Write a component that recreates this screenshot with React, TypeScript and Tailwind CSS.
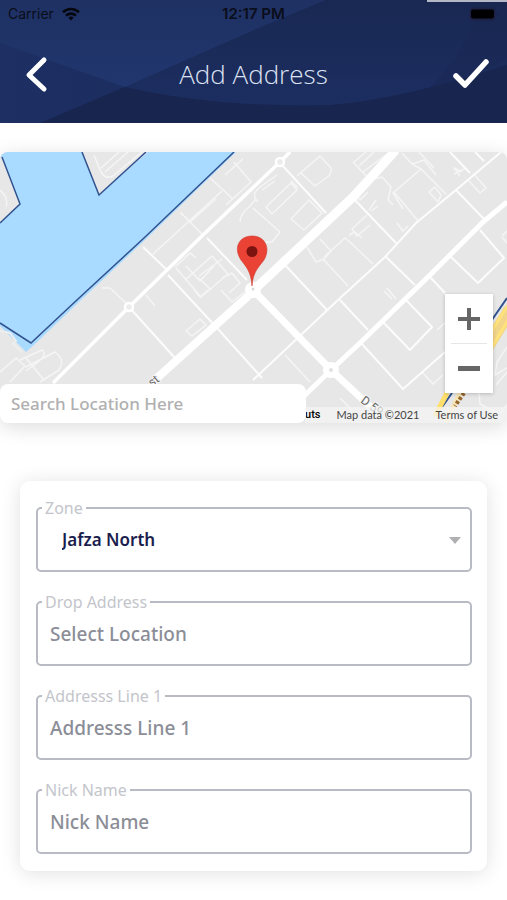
import { useState } from "react";

type Field = { id: string; label: string; placeholder: string };

const fields: Field[] = [
    { id: "drop", label: "Drop Address", placeholder: "Select Location" },
    { id: "line1", label: "Addresss Line 1", placeholder: "Addresss Line 1" },
    { id: "nick", label: "Nick Name", placeholder: "Nick Name" },
];

function StatusBar() {
    return (
        <div className="relative grid h-7 grid-cols-3 items-center px-2 text-sm text-[#0a0d1a] font-['Inter','Liberation_Sans',sans-serif]">
            <div className="flex items-center gap-2">
                <span>Carrier</span>
                <svg width="18" height="14" viewBox="0 0 18 14" fill="none" stroke="#05070f" strokeWidth="2.6">
                    <path d="M1 5.2a11.6 11.6 0 0 1 16 0" />
                    <path d="M4 8.6a7.4 7.4 0 0 1 10 0" />
                    <path d="M6.4 10.7a4 4 0 0 1 5.2 0L9 13.6z" fill="#05070f" stroke="none" />
                </svg>
            </div>
            <span className="text-center text-[15px] font-semibold">12:17 PM</span>
            <svg className="justify-self-end" width="30" height="14" viewBox="0 0 30 14">
                <rect x="0.5" y="0.5" width="26" height="13" rx="3.5" fill="#1c2145" />
                <rect x="2" y="2.5" width="23" height="9" rx="2" fill="#000" />
                <path d="M28 4.5q2 2.5 0 5z" fill="#1c2145" />
            </svg>
        </div>
    );
}

function Header() {
    return (
        <header className="relative h-[123px] overflow-hidden bg-[#1b2c5d]">
            <svg className="absolute inset-0 h-full w-full" viewBox="0 0 507 123" preserveAspectRatio="none">
                <defs>
                    <linearGradient id="hdr" x1="0" x2="1">
                        <stop offset="0" stopColor="#1d2f63" />
                        <stop offset="0.5" stopColor="#1b2c5d" />
                        <stop offset="1" stopColor="#192853" />
                    </linearGradient>
                    <linearGradient id="sky" x1="0" y1="0" x2="0" y2="1">
                        <stop offset="0" stopColor="#1f3163" />
                        <stop offset="1" stopColor="#20366e" />
                    </linearGradient>
                    <linearGradient id="wave" x1="0" y1="0" x2="0" y2="1">
                        <stop offset="0" stopColor="#192852" />
                        <stop offset="1" stopColor="#1c2e61" />
                    </linearGradient>
                </defs>
                <rect width="507" height="123" fill="url(#hdr)" />
                <path d="M0 0H326L254 30L125 87L0 43z" fill="url(#sky)" />
                <path d="M125 87L254 30L326 0H507V65Q400 100 330 105Q215 108 125 87z" fill="url(#wave)" />
                <path d="M427 90Q470 76 507 60V0H480Q470 50 427 90z" fill="#182650" opacity="0.4" />
                <path d="M40 123L125 87Q215 108 330 105Q400 100 507 65V123z" fill="#18254e" />
                <rect x="427" width="80" height="2" fill="#b3b7c6" />
            </svg>
            <StatusBar />
            <div className="relative flex h-[95px] items-center justify-between px-4 pb-1 text-[#dde3f3]">
                <button aria-label="Back" className="flex size-10 items-center justify-center">
                    <svg width="28" height="40" viewBox="22 54 28 40" fill="none" stroke="#fff" strokeWidth="5" strokeLinecap="round" strokeLinejoin="round">
                        <path d="M44 60L29 75L44 89" />
                    </svg>
                </button>
                <h1 className="text-[26px] leading-8 font-light font-['Open_Sans','Noto_Sans',sans-serif]">Add Address</h1>
                <button aria-label="Save" className="flex size-10 items-center justify-center">
                    <svg width="40" height="36" viewBox="452 57 40 36" fill="none" stroke="#fff" strokeWidth="5.5" strokeLinecap="round" strokeLinejoin="round">
                        <path d="M457 77L466 86L487 63" />
                    </svg>
                </button>
            </div>
        </header>
    );
}

function MapCanvas() {
    return (
        <svg className="block h-full w-full rounded-lg" viewBox="0 152 507 271" preserveAspectRatio="xMidYMid slice">
            <rect y="152" width="507" height="271" fill="#e7e7e7" />
            {/* water */}
            <path d="M0 152H236L146 239L80 301L36 343L26 352L18 344L0 326z" fill="#a9daff" />
            <path d="M0 157H2L20 204L0 223zM82 152L99 195L148 152z" fill="#e7e7e7" />
            <path d="M0 323L31 343L78 299L144 238L234 152M2 157L20 204L0 223M82 152L99 195L146 152" fill="none" stroke="#31538f" strokeWidth="1.5" />
            <path d="M0 331L10 333L16 341L13 344L22 352" fill="none" stroke="#eee" strokeWidth="2" />

            {/* lanes and plots */}
            <g fill="none" stroke="#f5f5f5" strokeWidth="1.5" strokeLinejoin="round">
                <path d="M94 155L101 172Q106 180 113 176L142 152M101 168L119 152M105 172L128 152M0 190Q9 198 6 207" />
                <path d="M210 178L233 199M234 162L251 182L226 205M225 175L243 159M180 212L203 235M153 254L222 191M190 222L216 199M240 222Q240 214 249 207L256 199" />
                <path d="M175 267L190 253L196 258M176 268L201 297L228 274L212 256L185 280M186 266L200 281L214 266M199 276L222 259M211 290L199 278M222 278L232 273L240 283L229 293" />
                <path d="M297 176L320 156L331 168Q332 174 326 178L315 186L301 173M353 162L370 180L388 161M354 162L366 152M359 166L374 152M363 172L390 152M262 190L275 181M258 202Q250 195 260 187L277 175M266 207L291 183L297 190L272 214zM291 181L298 188M291 219L309 200L322 213L304 230zM253 208L280 232L272 242L253 243" />
                <path d="M402 153L412 164L421 169L393 193L403 209M421 169L446 194M412 164L424 160L436 175M419 152L434 168M460 176L454 168L462 172M454 174L466 168M468 180L480 193L486 188L473 173M429 192L435 187L441 195L438 202zM370 180L382 177L391 187L388 200L393 205M368 192L360 200L352 192M376 200L369 210M378 206L371 211M397 223L403 231L408 226M394 192L418 221M367 215L352 229L357 236L370 225" />
                <path d="M307 247L316 262L324 259L331 251L320 239M323 259L348 286M324 257L345 238L352 244L373 264M349 235L355 232L362 238M384 291L392 299M387 288L396 299" />
                <path d="M186 331L200 319L206 325L192 336zM194 290L200 297L208 290M221 290L232 302L245 292M146 295L155 306M285 355L310 382M340 398L352 410" />
                <path d="M20 360L42 350Q48 354 38 362L26 371M26 358L44 380M0 372L16 358L25 366L10 382M26 367L55 352Q66 360 59 370L40 382M102 288L110 288L129 306M422 372L433 384L443 375M437 330L446 322M502 236L507 231M502 237L507 243M507 347L497 362L495 375L507 368M479 393L480 404L499 414L507 405M496 385L507 372" />
            </g>

            {/* streets */}
            <g fill="none" stroke="#fcfcfc" strokeWidth="2" strokeLinejoin="round">
                <path d="M282 165L326 213M207 238L247 280M143 247L167 270M168 275L217 328L262 378M129 307L175 358" />
                <path d="M501 152L456 190L416 223L385 257L338 300L303 333L253 380M353 198L396 243M386 257L415 285M456 190L485 220M450 152L470 173M475 152L484 161" />
                <path d="M285 265L327 310M340 300L368 330M383 322L410 350L432 327L406 300M361 343L403 389L445 352M451 257L478 283L504 258L480 230M430 277L445 293" />
            </g>
            <path d="M290 152L280 162L203 235L167 270L129 307L53 383" fill="none" stroke="#fff" strokeWidth="3.5" />
            <path d="M507 202L483 222L430 275L360 343L331 370L303 397" fill="none" stroke="#fff" strokeWidth="5" />
            <path d="M253 290L331 370L360 397L378 414" fill="none" stroke="#fff" strokeWidth="7" />
            <path d="M396 150L353 197L256 288" fill="none" stroke="#fff" strokeWidth="9" />
            <path d="M256 288L247 297L217 324L157 378" fill="none" stroke="#fff" strokeWidth="8" />
            <g fill="#ececec" stroke="#fff" strokeWidth="2.5">
                <circle cx="280" cy="162" r="4" />
                <circle cx="129" cy="307" r="4" />
            </g>
            <circle cx="331" cy="370" r="8" fill="#fff" />
            <circle cx="331" cy="370" r="2" fill="#e2e2e2" />
            <circle cx="253" cy="290" r="8" fill="#fff" />
            <circle cx="253" cy="289" r="1.5" fill="#d8d8d8" />

            {/* highway */}
            <path d="M510 310L487 347" stroke="#f3d58a" strokeWidth="13" />
            <path d="M510 302L484 343M510 317L490 350" stroke="#ffe37a" strokeWidth="3" />
            <path d="M507 298L485 330M452 393L442 407" stroke="#31538f" strokeWidth="2" />
            <path d="M447 393L435 416" stroke="#ffdf6b" strokeWidth="5" />
            <path d="M460 393L446 422" stroke="#f7e6b8" strokeWidth="5" />
            <path d="M464 393L455 406" stroke="#95652b" strokeWidth="4" strokeDasharray="3 2" />

            <g fill="#666" stroke="#f5f5f5" strokeWidth="2" paintOrder="stroke" fontSize="12" fontFamily="Roboto, sans-serif">
                <text transform="translate(152 387) rotate(-38)">st</text>
                <text transform="translate(360 402) rotate(36)">D 59</text>
            </g>

            {/* pin */}
            <path d="M252 286C251 272 247 268 241 260C233 248 239 236 252 236C265 236 271 248 264 260C258 268 253 272 252 286z" fill="#ea4335" stroke="#cf3b30" strokeWidth="0.6" />
            <circle cx="252" cy="251.500" r="5.5" fill="#7b140e" />
        </svg>
    );
}

function MapCard() {
    return (
        <section className="relative mt-[29px] h-[271px] rounded-lg shadow-[0_4px_20px_rgba(0,0,0,0.14)]">
            <MapCanvas />
            <div className="absolute right-[14px] bottom-[30px] flex w-12 flex-col items-center bg-white shadow-[0_1px_4px_rgba(0,0,0,0.2)]">
                <button aria-label="Zoom in" className="flex h-[49px] w-full items-center justify-center">
                    <svg width="22" height="22" viewBox="0 0 22 22" fill="#666">
                        <path d="M9 0h4v9h9v4h-9v9H9v-9H0V9h9z" />
                    </svg>
                </button>
                <div className="h-px w-9 bg-[#e6e6e6]" />
                <button aria-label="Zoom out" className="flex h-[49px] w-full items-center justify-center">
                    <svg width="22" height="5" viewBox="0 0 22 5" fill="#666">
                        <path d="M0 0h22v5H0z" />
                    </svg>
                </button>
            </div>
            <div className="absolute right-0 bottom-0 flex h-4 items-center gap-4 rounded-br-lg bg-[#f5f5f5]/70 pr-[9px] text-[11px] leading-4 text-[#444] font-['Lato',sans-serif]">
                <button className="font-medium text-black font-['Roboto',sans-serif]">uts</button>
                <span>Map data ©2021</span>
                <a href="#terms">Terms of Use</a>
            </div>
            <input
                type="text"
                aria-label="Search location"
                placeholder="Search Location Here"
                className="absolute bottom-0 left-0 h-[39px] w-[306px] rounded-lg bg-white pl-[11px] text-[17px] font-medium text-[#444] outline-none placeholder:text-[#b0b0b0]"
            />
        </section>
    );
}

const boxCls = "h-[74px] min-w-0 rounded-[5px] border-2 border-[#b8bac4]";
const legendCls = "ml-1 h-5 px-[3px] text-base leading-5 text-[#c3c5cb]";

export default function App() {
    const [zone, setZone] = useState("Jafza North");

    return (
        <main className="w-full overflow-hidden bg-white pb-[29px] font-['Noto_Sans','Open_Sans',sans-serif]">
            <Header />
            <MapCard />

            <form className="mx-5 mt-[58px] flex flex-col gap-5 rounded-[10px] bg-white pt-[17px] pr-[15px] pb-[17px] pl-4 shadow-[0_2px_20px_rgba(0,0,0,0.12)]">
                <fieldset className={boxCls}>
                    <legend className={legendCls}>
                        <label htmlFor="zone">Zone</label>
                    </legend>
                    <div className="relative flex h-11 items-center">
                        <select
                            id="zone"
                            value={zone}
                            onChange={e => setZone(e.target.value)}
                            className="h-full w-full appearance-none bg-transparent pl-6 text-[17px] font-semibold text-[#1a1d4d] outline-none"
                        >
                            <option>Jafza North</option>
                            <option>Jafza South</option>
                        </select>
                        <svg className="pointer-events-none absolute right-[9px]" width="12" height="7" viewBox="0 0 12 7">
                            <path d="M0 0h12L6 7z" fill="#b0b0b3" />
                        </svg>
                    </div>
                </fieldset>

                {fields.map(f => (
                    <fieldset key={f.id} className={boxCls}>
                        <legend className={legendCls}>
                            <label htmlFor={f.id}>{f.label}</label>
                        </legend>
                        <input
                            id={f.id}
                            type="text"
                            placeholder={f.placeholder}
                            className="block h-11 w-full bg-transparent pl-3 text-[19px] font-medium text-[#333] outline-none placeholder:text-[#8b8d97]"
                        />
                    </fieldset>
                ))}
            </form>
        </main>
    );
}
